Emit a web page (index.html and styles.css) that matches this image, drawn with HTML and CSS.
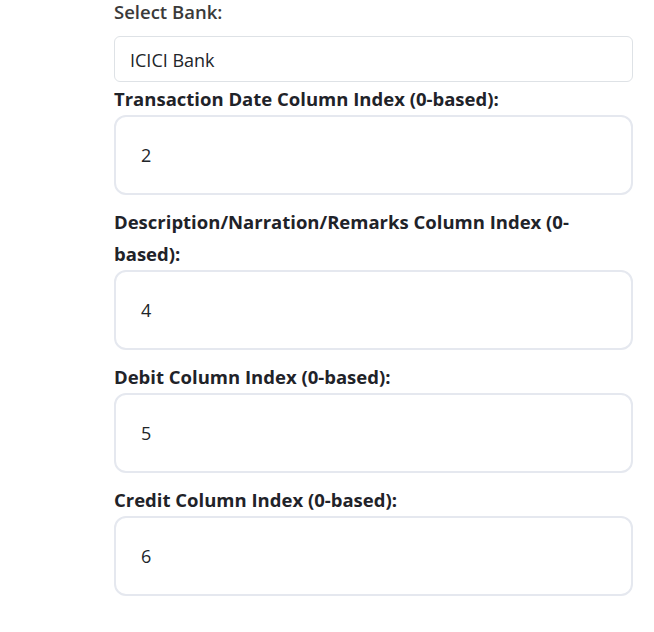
FILE: index.html
```html
<!DOCTYPE html>
<html>
<head>
<meta charset="utf-8">
<link rel="stylesheet" href="styles.css">
</head>
<body>
<div class="page">
  <form class="form">
    <label class="bank-label" for="bank">Select Bank:</label>
    <div class="select-box" id="bank">ICICI Bank</div>

    <label class="field-label">Transaction Date Column Index (0-based):</label>
    <div class="num-input">2</div>

    <label class="field-label">Description/Narration/Remarks Column Index (0-based):</label>
    <div class="num-input">4</div>

    <label class="field-label">Debit Column Index (0-based):</label>
    <div class="num-input">5</div>

    <label class="field-label">Credit Column Index (0-based):</label>
    <div class="num-input">6</div>
  </form>
</div>
</body>
</html>
```

FILE: styles.css
```css
html, body {
  margin: 0;
  padding: 0;
  background: #ffffff;
}

body {
  font-family: "Open Sans", "Noto Sans", sans-serif;
  color: #212529;
}

.page {
  padding-left: 114px;
}

.form {
  width: 519px;
  display: flex;
  flex-direction: column;
}

.bank-label {
  display: block;
  font-size: 18.5px;
  font-weight: 600;
  color: #3a3a3a;
  line-height: 24px;
  padding-top: 0;
  margin-bottom: 12px;
}

.select-box {
  box-sizing: border-box;
  height: 46px;
  border: 1px solid #dee2e6;
  border-radius: 6px;
  padding: 0 15px;
  font-size: 18px;
  line-height: 46px;
  color: #212529;
  margin-bottom: 1px;
}

.field-label {
  display: block;
  font-size: 18.5px;
  font-weight: 700;
  line-height: 32px;
  color: #1f2329;
  padding-right: 4px;
}

.num-input {
  box-sizing: border-box;
  height: 80px;
  border: 2px solid #e5e8ef;
  border-radius: 12px;
  padding: 0 25px;
  font-size: 18px;
  line-height: 77px;
  color: #212529;
  margin-bottom: 11px;
}
```
